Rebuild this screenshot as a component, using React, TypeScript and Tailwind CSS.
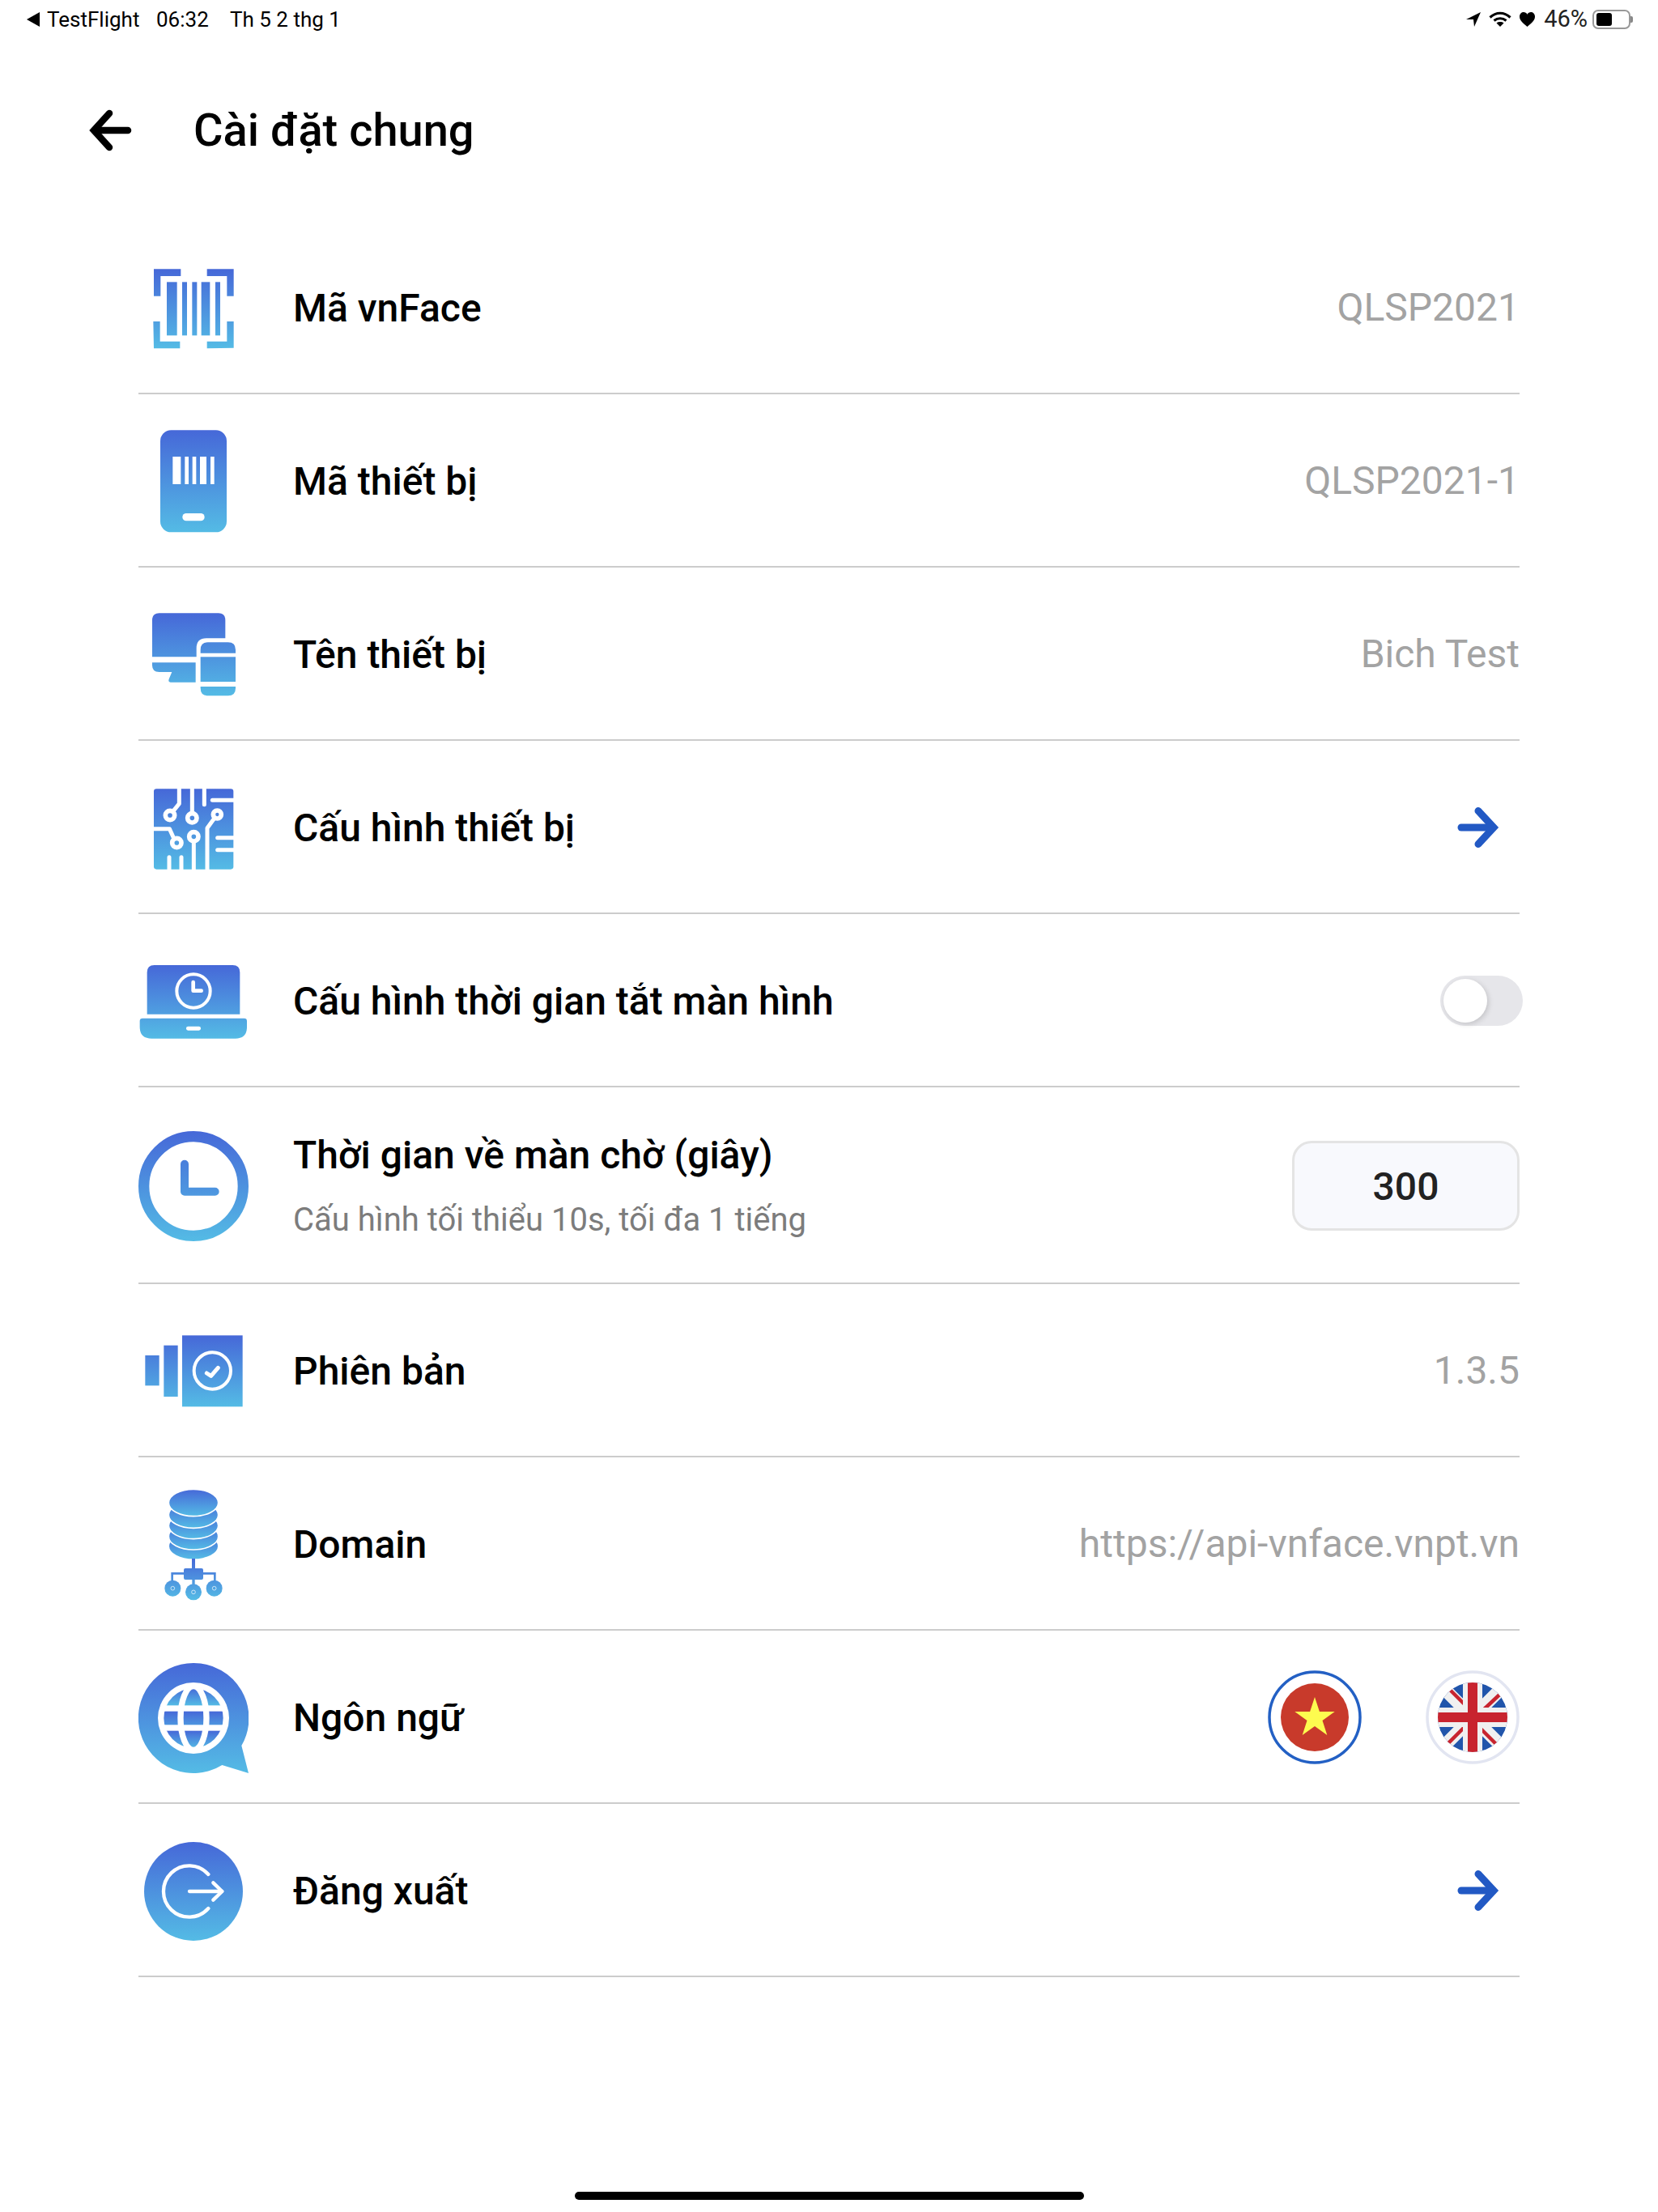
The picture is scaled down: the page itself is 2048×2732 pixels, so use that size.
import React from "react";

const C1 = "#4668d8";
const C2 = "#54bbe5";

function Grad({ id, y1, y2 }: { id: string; y1: number; y2: number }) {
  return (
    <linearGradient id={id} gradientUnits="userSpaceOnUse" x1="0" x2="0" y1={y1} y2={y2}>
      <stop offset="0" stopColor={C1} />
      <stop offset="1" stopColor={C2} />
    </linearGradient>
  );
}

function Ic({ y, children }: { y: number; children: React.ReactNode }) {
  return (
    <svg width="136" height="200" viewBox={`33 ${y} 408 600`} className="shrink-0">
      {children}
    </svg>
  );
}

const IconBarcode = () => (
  <Ic y={-93}>
    <defs><Grad id="g1" y1={64} y2={358} /></defs>
    <g fill="url(#g1)">
      <path d="M90 64H190V90H115V164H90Z" />
      <path d="M287 64H386V164H361V90H287Z" />
      <path d="M88 258H113V332H187V358H90Z" />
      <path d="M361 258H386V356L287 358V332H361Z" />
      <rect x="138" y="112" width="38" height="198" />
      <rect x="195" y="112" width="18" height="198" />
      <rect x="232" y="112" width="18" height="198" />
      <rect x="266" y="112" width="32" height="198" />
      <rect x="318" y="112" width="18" height="198" />
    </g>
  </Ic>
);

const IconPhone = () => (
  <Ic y={552}>
    <defs><Grad id="g2" y1={664} y2={1042} /></defs>
    <rect x="114" y="664" width="246" height="378" rx="40" fill="url(#g2)" />
    <g fill="#fff">
      <rect x="160" y="762" width="30" height="102" />
      <rect x="205" y="762" width="14" height="102" />
      <rect x="233" y="762" width="14" height="102" />
      <rect x="261" y="762" width="24" height="102" />
      <rect x="300" y="762" width="14" height="102" />
      <rect x="196" y="972" width="82" height="28" rx="14" />
    </g>
  </Ic>
);

const IconDevices = () => (
  <Ic y={-96}>
    <defs><Grad id="g3" y1={52} y2={358} /></defs>
    <g fill="url(#g3)">
      <path d="M110 52H330Q355 52 355 78V145H285Q248 145 248 182V214H84V78Q84 52 110 52Z" />
      <path d="M84 235H245V308H152Q142 306 146 296L157 270H110Q84 270 84 245Z" />
      <path d="M263 200V188Q263 160 291 160H365Q393 160 393 188V200Z" />
      <rect x="263" y="214" width="130" height="92" />
      <path d="M263 324H393V330Q393 358 365 358H291Q263 358 263 330Z" />
    </g>
  </Ic>
);

const IconCircuit = () => (
  <Ic y={543}>
    <defs><Grad id="g4" y1={700} y2={998} /></defs>
    <rect x="90" y="700" width="295" height="298" rx="10" fill="url(#g4)" />
    <g fill="none" stroke="#fff" strokeWidth="15" strokeLinecap="round" strokeLinejoin="round">
      <path d="M184 695V755L160 785" />
      <path d="M232 695V790" />
      <path d="M277 695V758" />
      <path d="M307 742H390" />
      <path d="M312 812L288 845V1003" />
      <path d="M238 900V1003" />
      <path d="M85 848H148L165 885" />
      <path d="M147 953V1003" />
      <path d="M192 953V1003" />
      <path d="M326 881H390" />
      <path d="M326 926H390" />
    </g>
    <g fill="url(#g4)" stroke="#fff" strokeWidth="17">
      <circle cx="150" cy="798" r="17" />
      <circle cx="232" cy="808" r="17" />
      <circle cx="325" cy="795" r="15" />
      <circle cx="238" cy="877" r="17" />
      <circle cx="175" cy="900" r="17" />
    </g>
  </Ic>
);

const IconLaptop = () => (
  <Ic y={-135}>
    <defs><Grad id="g5" y1={33} y2={305} /></defs>
    <path d="M65 215V60Q65 33 92 33H382Q409 33 409 60V215Z" fill="url(#g5)" />
    <path d="M48 230H425Q435 230 435 240V262Q435 305 392 305H82Q38 305 38 262V240Q38 230 48 230Z" fill="url(#g5)" />
    <circle cx="237" cy="129" r="62" fill="none" stroke="#fff" strokeWidth="12" />
    <path d="M236 96V128H266" fill="none" stroke="#fff" strokeWidth="14" strokeLinecap="round" strokeLinejoin="round" />
    <rect x="210" y="260" width="54" height="15" rx="7" fill="#fff" />
  </Ic>
);

const IconClock = () => (
  <Ic y={552}>
    <defs><Grad id="g6" y1={648} y2={1056} /></defs>
    <circle cx="237" cy="852" r="184" fill="none" stroke="url(#g6)" strokeWidth="40" />
    <path d="M204 770V872H317" fill="none" stroke="url(#g6)" strokeWidth="30" strokeLinecap="round" strokeLinejoin="round" />
  </Ic>
);

const IconVersion = () => (
  <Ic y={-81}>
    <defs><Grad id="g7" y1={88} y2={352} /></defs>
    <g fill="url(#g7)">
      <rect x="58" y="162" width="52" height="112" />
      <rect x="127" y="125" width="52" height="190" />
      <rect x="195" y="88" width="224" height="264" />
    </g>
    <circle cx="307" cy="219" r="68" fill="none" stroke="#fff" strokeWidth="12" />
    <path d="M286 228L302 238L328 208" fill="none" stroke="#fff" strokeWidth="15" strokeLinecap="round" strokeLinejoin="round" />
  </Ic>
);

const IconDb = () => (
  <Ic y={558}>
    <defs>
      <linearGradient id="g8" x1="0" x2="0" y1="0" y2="1">
        <stop offset="0" stopColor={C1} />
        <stop offset="1" stopColor={C2} />
      </linearGradient>
      <Grad id="g8b" y1={910} y2={1065} />
    </defs>
    <ellipse cx="237" cy="866" rx="90" ry="47" fill="url(#g8)" />
    <ellipse cx="237" cy="830" rx="92" ry="49" fill="url(#g8)" stroke="#fff" strokeWidth="5" />
    <ellipse cx="237" cy="790" rx="92" ry="49" fill="url(#g8)" stroke="#fff" strokeWidth="5" />
    <ellipse cx="237" cy="750" rx="92" ry="49" fill="url(#g8)" stroke="#fff" strokeWidth="5" />
    <ellipse cx="237" cy="705" rx="92" ry="50" fill="url(#g8)" stroke="#fff" strokeWidth="5" />
    <g fill="url(#g8b)">
      <rect x="231" y="912" width="12" height="38" />
      <rect x="201" y="948" width="72" height="42" rx="6" />
      <rect x="232" y="988" width="10" height="24" />
      <circle cx="160" cy="1022" r="30" />
      <circle cx="237" cy="1036" r="30" />
      <circle cx="314" cy="1022" r="30" />
    </g>
    <path d="M158 995V967H316V995" fill="none" stroke="url(#g8b)" strokeWidth="8" />
    <g fill="none" stroke="#fff" strokeWidth="2.5" opacity="0.85">
      <circle cx="160" cy="1022" r="7" />
      <circle cx="237" cy="1036" r="7" />
      <circle cx="314" cy="1022" r="7" />
    </g>
  </Ic>
);

const IconGlobe = () => (
  <Ic y={-60}>
    <defs>
      <Grad id="g9" y1={39} y2={447} />
      <Grad id="g9a" y1={130} y2={196} />
      <Grad id="g9b" y1={218} y2={310} />
      <Grad id="g9c" y1={290} y2={356} />
      <clipPath id="c9"><circle cx="237" cy="243" r="110" /></clipPath>
    </defs>
    <path d="M237 39A204 204 0 0 1 415 345L441 447L343 417A204 204 0 1 1 237 39Z" fill="url(#g9)" />
    <circle cx="237" cy="243" r="132" fill="#fff" />
    <g clipPath="url(#c9)">
      <rect x="120" y="130" width="240" height="66" fill="url(#g9a)" />
      <rect x="120" y="218" width="240" height="50" fill="url(#g9b)" />
      <rect x="120" y="290" width="240" height="66" fill="url(#g9c)" />
    </g>
    <ellipse cx="237" cy="243" rx="48" ry="118" fill="none" stroke="#fff" strokeWidth="22" />
  </Ic>
);

const IconLogout = () => (
  <Ic y={582}>
    <defs><Grad id="g10" y1={702} y2={1068} /></defs>
    <circle cx="237" cy="885" r="183" fill="url(#g10)" />
    <g fill="none" stroke="#fff" strokeWidth="13" strokeLinecap="round" strokeLinejoin="round">
      <path d="M292 822A95 95 0 1 0 292 948" />
      <path d="M222 885H343" />
      <path d="M310 853L343 885L310 917" />
    </g>
  </Ic>
);

const ArrowRight = () => (
  <svg width="52" height="54" viewBox="0 0 52 54" className="mr-[25px]" fill="none" stroke="#2259c4" strokeWidth="9" strokeLinecap="round" strokeLinejoin="miter">
    <path d="M5 27H44" />
    <path d="M26 6.500L45 27L26 47.500" />
  </svg>
);

const FlagVN = () => (
  <svg width="116" height="116" viewBox="0 0 116 116">
    <circle cx="58" cy="58" r="56" fill="#fff" stroke="#2360c4" strokeWidth="3.5" />
    <circle cx="58" cy="58" r="42" fill="#c83a2b" />
    <polygon points="58,33 63.9,50.9 82.7,51 67.5,62.1 73.3,80 58,69 42.7,80 48.5,62.1 33.3,51 52.1,50.9" fill="#fdfb4f" />
  </svg>
);

const FlagUK = () => (
  <svg width="116" height="116" viewBox="0 0 116 116">
    <defs><clipPath id="uk"><circle cx="58" cy="58" r="43" /></clipPath></defs>
    <circle cx="58" cy="58" r="56" fill="#fff" stroke="#e2e5f1" strokeWidth="3.5" />
    <g clipPath="url(#uk)">
      <rect x="10" y="10" width="96" height="96" fill="#2155ab" />
      <path d="M15 15L101 101M101 15L15 101" stroke="#f0f0f0" strokeWidth="16" />
      <path d="M27 21L54 48M104 18L70 50M62 66L96 100M48 70L18 100" stroke="#c8242f" strokeWidth="4.5" />
      <rect x="46" y="10" width="24" height="96" fill="#f0f0f0" />
      <rect x="10" y="46" width="96" height="24" fill="#f0f0f0" />
      <rect x="52" y="10" width="12" height="96" fill="#c8242f" />
      <rect x="10" y="52" width="96" height="12" fill="#c8242f" />
    </g>
  </svg>
);

function Row({ icon, label, sub, right, tall }: { icon: React.ReactNode; label: string; sub?: string; right?: React.ReactNode; tall?: boolean }) {
  return (
    <div className={`flex items-center border-b-2 border-[#cccccc] pt-[2px] ${tall ? "h-[243px]" : "h-[214px]"}`}>
      <div className="flex w-[136px] shrink-0 justify-center">{icon}</div>
      <div className="ml-[55px] flex flex-1 flex-col gap-[29px]">
        <div className="text-[48px] leading-[55px] font-medium text-[#000000]">{label}</div>
        {sub && <div className="text-[40px] leading-[48px] text-[#7c7c7c]">{sub}</div>}
      </div>
      {right}
    </div>
  );
}

const Val = ({ t }: { t: string }) => <div className="text-[48px] text-[#a3a3a3]">{t}</div>;

export default function App() {
  return (
    <div className="relative h-[2732px] w-[2048px] overflow-hidden bg-white font-['Roboto',sans-serif]">
      <div className="flex h-[48px] items-center pl-[33px] pr-[31px] text-[26px] text-black">
        <svg width="17" height="18" viewBox="0 0 17 18"><polygon points="16,0 16,18 0,9" fill="#000" /></svg>
        <span className="ml-[8px] w-[135px]">TestFlight</span>
        <span className="w-[91px]">06:32</span>
        <span>Th 5 2 thg 1</span>
        <div className="ml-auto flex items-center">
          <svg width="18" height="18" viewBox="0 0 18 18"><polygon points="0,9 18,0 10,18 9,9" fill="#000" /></svg>
          <svg className="ml-[10px]" width="28" height="20" viewBox="0 0 28 20" fill="none" stroke="#000" strokeWidth="3.2">
            <path d="M1.5 7.5C9 .5 19 .5 26.5 7.5" />
            <path d="M6.5 11.5C11 7.8 17 7.8 21.5 11.5" />
            <path d="M14 19L9.5 14.5C12 12.6 16 12.6 18.5 14.5Z" fill="#000" stroke="none" />
          </svg>
          <svg className="ml-[10px]" width="19" height="18" viewBox="0 0 19 18"><path d="M9.5 18C4 13.5 0 10 0 5.5C0 2 2.5 0 5 0C7 0 8.500 1 9.500 2.800C10.500 1 12 0 14 0C16.500 0 19 2 19 5.500C19 10 15 13.500 9.500 18Z" fill="#000" /></svg>
          <span className="ml-[11px] text-[29px] text-[#222]">46%</span>
          <div className="ml-[6px] flex h-[24px] w-[47px] items-center rounded-[7px] border-2 border-[#999999] pl-[3px]">
            <div className="h-[16px] w-[19px] rounded-[3px] bg-black" />
          </div>
          <div className="h-[8px] w-[3px] rounded-r-[2px] bg-[#888888]" />
        </div>
      </div>

      <div className="flex h-[225px] items-start pl-[109px] pt-[65px]">
        <div className="flex h-[96px] items-center">
          <svg width="54" height="52" viewBox="0 0 54 52" fill="none" stroke="#000" strokeWidth="8.500" strokeLinecap="round" strokeLinejoin="miter">
            <path d="M9 26H49" />
            <path d="M26 5L7 26L26 47" />
          </svg>
          <div className="ml-[76px] text-[56px] font-medium text-[#000000]">Cài đặt chung</div>
        </div>
      </div>

      <div className="ml-[171px] w-[1706px]">
        <Row icon={<IconBarcode />} label="Mã vnFace" right={<Val t="QLSP2021" />} />
        <Row icon={<IconPhone />} label="Mã thiết bị" right={<Val t="QLSP2021-1" />} />
        <Row icon={<IconDevices />} label="Tên thiết bị" right={<Val t="Bich Test" />} />
        <Row icon={<IconCircuit />} label="Cấu hình thiết bị" right={<ArrowRight />} />
        <Row
          icon={<IconLaptop />}
          label="Cấu hình thời gian tắt màn hình"
          right={
            <div className="relative -mr-[4px] h-[62px] w-[102px] rounded-full bg-[#e6e6ea]">
              <div className="absolute left-[4px] top-[4px] h-[54px] w-[54px] rounded-full bg-white shadow-[2px_2px_6px_rgba(0,0,0,0.15)]" />
            </div>
          }
        />
        <Row
          tall
          icon={<IconClock />}
          label="Thời gian về màn chờ (giây)"
          sub="Cấu hình tối thiểu 10s, tối đa 1 tiếng"
          right={
            <div className="flex h-[111px] w-[281px] items-center justify-center rounded-[24px] border-[3px] border-[#e4e4e4] bg-[#f8f9fd] pt-[2px] text-[48px] font-medium text-[#222222]">
              300
            </div>
          }
        />
        <Row icon={<IconVersion />} label="Phiên bản" right={<Val t="1.3.5" />} />
        <Row icon={<IconDb />} label="Domain" right={<Val t="https://api-vnface.vnpt.vn" />} />
        <Row
          icon={<IconGlobe />}
          label="Ngôn ngữ"
          right={
            <div className="flex items-center gap-[79px]">
              <FlagVN />
              <FlagUK />
            </div>
          }
        />
        <Row icon={<IconLogout />} label="Đăng xuất" right={<ArrowRight />} />
      </div>

      <div className="absolute bottom-[15px] left-[710px] h-[10px] w-[629px] rounded-full bg-black" />
    </div>
  );
}
